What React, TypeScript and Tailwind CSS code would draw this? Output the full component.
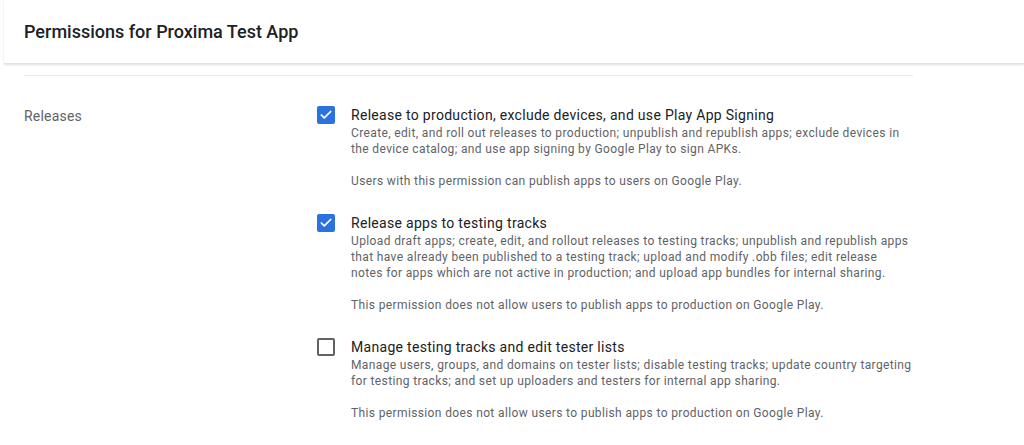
import { Check } from 'lucide-react';

interface Permission {
  title: string;
  description: string;
  note: string;
  checked: boolean;
  width: string;
}

const permissions: Permission[] = [
  {
    title: 'Release to production, exclude devices, and use Play App Signing',
    description:
      'Create, edit, and roll out releases to production; unpublish and republish apps; exclude devices in the device catalog; and use app signing by Google Play to sign APKs.',
    note: 'Users with this permission can publish apps to users on Google Play.',
    checked: true,
    width: 'w-[559px]',
  },
  {
    title: 'Release apps to testing tracks',
    description:
      'Upload draft apps; create, edit, and rollout releases to testing tracks; unpublish and republish apps that have already been published to a testing track; upload and modify .obb files; edit release notes for apps which are not active in production; and upload app bundles for internal sharing.',
    note: 'This permission does not allow users to publish apps to production on Google Play.',
    checked: true,
    width: 'w-[559px]',
  },
  {
    title: 'Manage testing tracks and edit tester lists',
    description:
      'Manage users, groups, and domains on tester lists; disable testing tracks; update country targeting for testing tracks; and set up uploaders and testers for internal app sharing.',
    note: 'This permission does not allow users to publish apps to production on Google Play.',
    checked: false,
    width: 'w-[564px]',
  },
];

function Checkbox({ checked }: { checked: boolean }) {
  if (checked) {
    return (
      <div className="w-[18px] h-[18px] rounded-[2px] bg-[#2b72e0] flex items-center justify-center shrink-0">
        <Check size={14} strokeWidth={3} color="white" />
      </div>
    );
  }
  return <div className="w-[18px] h-[18px] rounded-[2px] border-2 border-[#5f6368] shrink-0" />;
}

export default function App() {
  return (
    <div className="w-[1024px] h-[445px] bg-white overflow-hidden font-['Roboto',sans-serif]">
      <div className="h-[64px] pl-6 flex items-center ml-1 shadow-[0_1px_2px_rgba(0,0,0,0.12)] border-b border-[#e2e2e2]">
        <h1 className="text-[18px] font-medium text-[#202124] -ml-1">Permissions for Proxima Test App</h1>
      </div>
      <div className="ml-6 mt-[11px] w-[889px] h-px bg-[#e8eaed]" />
      <div className="flex pt-[29px] pl-6">
        <div className="w-[293px] text-[14px] text-[#5f6368] leading-5 pt-[1px] tracking-[0.2px]">Releases</div>
        <div className="flex flex-col gap-[24px]">
          {permissions.map((p) => (
            <div key={p.title} className="flex gap-4">
              <div className="pt-[1px]">
                <Checkbox checked={p.checked} />
              </div>
              <div className={p.width}>
                <div className="text-[14px] leading-5 text-[#202124] tracking-[0.3px]">{p.title}</div>
                <p className="text-[12px] leading-4 text-[#5f6368] tracking-[0.37px]">{p.description}</p>
                <p className="mt-4 text-[12px] leading-4 text-[#5f6368] tracking-[0.37px]">{p.note}</p>
              </div>
            </div>
          ))}
        </div>
      </div>
    </div>
  );
}
